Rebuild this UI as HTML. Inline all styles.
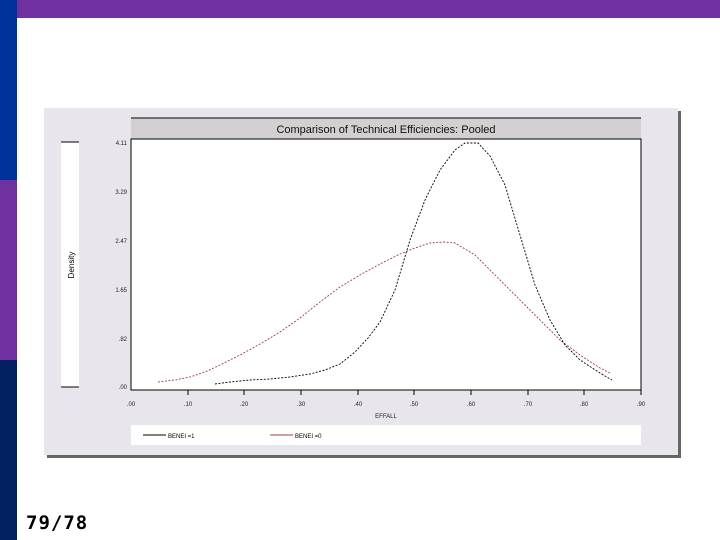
<!DOCTYPE html>
<html><head><meta charset="utf-8"><style>
body{margin:0;width:720px;height:540px;overflow:hidden;background:#fff;position:relative;font-family:"Liberation Sans",sans-serif}
</style></head><body>
<div style="position:absolute;left:0;top:0;width:17px;height:180px;background:#003399"></div>
<div style="position:absolute;left:0;top:180px;width:17px;height:180px;background:#7030a0"></div>
<div style="position:absolute;left:0;top:360px;width:17px;height:180px;background:#002060"></div>
<div style="position:absolute;left:17px;top:0;width:703px;height:18px;background:#7030a0"></div>
<div style="position:absolute;left:26px;top:512px;font-size:19px;font-weight:bold;letter-spacing:1px;color:#000;font-family:'DejaVu Sans Mono',monospace">79/78</div>
<svg style="position:absolute;left:0;top:0" width="720" height="540">
<rect x="47" y="111" width="634" height="347" fill="#666"/>
<rect x="44" y="108" width="634" height="347" fill="#e8e6ec"/>
<rect x="131" y="118" width="510" height="21" fill="#d3cfd3"/>
<line x1="131" y1="118" x2="641" y2="118" stroke="#000"/>
<text x="386" y="133" font-size="11" text-anchor="middle" fill="#111">Comparison of Technical Efficiencies: Pooled</text>
<rect x="131" y="139" width="510" height="251" fill="#fff" stroke="#000"/>
<rect x="61" y="142" width="18" height="245" fill="#fff"/>
<line x1="61" y1="142" x2="79" y2="142" stroke="#000"/><line x1="61" y1="387" x2="79" y2="387" stroke="#000"/>
<text transform="translate(74,265) rotate(-90)" font-size="8" text-anchor="middle">Density</text>
<g font-size="6" text-anchor="end" fill="#222">
<text x="127" y="145">4.11</text><text x="127" y="194">3.29</text><text x="127" y="243">2.47</text><text x="127" y="292">1.65</text><text x="127" y="341">.82</text><text x="127" y="389">.00</text>
</g>
<g font-size="6" text-anchor="middle" fill="#222">
<text x="131" y="406">.00</text><text x="188" y="406">.10</text><text x="244" y="406">.20</text><text x="301" y="406">.30</text><text x="358" y="406">.40</text><text x="414" y="406">.50</text><text x="471" y="406">.60</text><text x="528" y="406">.70</text><text x="584" y="406">.80</text><text x="641" y="406">.90</text>
<text x="386" y="418">EFFALL</text>
</g>
<g stroke="#000" stroke-width="1">
<line x1="188" y1="390" x2="188" y2="395"/><line x1="244" y1="390" x2="244" y2="395"/><line x1="301" y1="390" x2="301" y2="395"/><line x1="358" y1="390" x2="358" y2="395"/><line x1="414" y1="390" x2="414" y2="395"/><line x1="471" y1="390" x2="471" y2="395"/><line x1="528" y1="390" x2="528" y2="395"/><line x1="584" y1="390" x2="584" y2="395"/><line x1="641" y1="390" x2="641" y2="395"/>
</g>
<polyline fill="none" stroke="#a04040" stroke-width="0.9" stroke-dasharray="2,1.5" points="158,382 175,380 190,377 205,372 220,365 240,355 260,344 280,332 300,318 320,302 340,287 360,275 380,264 400,254 415,248 430,243 445,242 455,243 475,255 500,280 530,310 560,340 580,355 600,368 610,373"/>
<polyline fill="none" stroke="#000" stroke-width="0.9" stroke-dasharray="2,1.5" points="215,384 230,382 250,380 270,379 290,377 310,374 325,370 340,364 355,352 368,338 380,322 395,290 410,240 425,200 440,170 455,150 465,143 478,143 490,156 505,185 520,235 535,285 550,320 565,345 580,360 600,373 612,380"/>
<rect x="131" y="425" width="510" height="20" fill="#fff"/>
<line x1="143" y1="435" x2="166" y2="435" stroke="#000"/>
<text x="168" y="438" font-size="6">BENEI =1</text>
<line x1="270" y1="435" x2="293" y2="435" stroke="#a04040"/>
<text x="295" y="438" font-size="6">BENEI =0</text>
</svg>
</body></html>
